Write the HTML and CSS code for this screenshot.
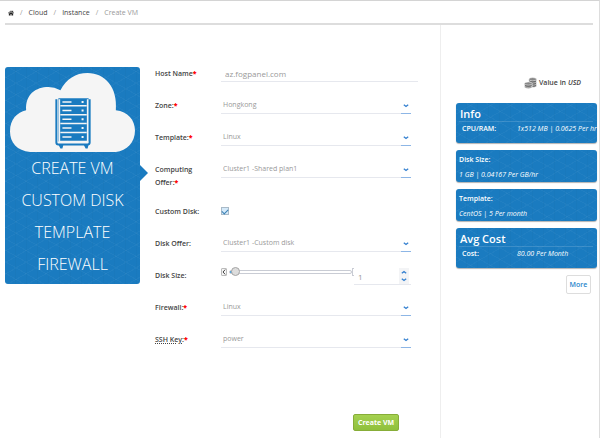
FILE: index.html
```html
<!DOCTYPE html>
<html lang="en">
<head>
<meta charset="utf-8">
<title>Create VM</title>
<link rel="stylesheet" href="styles.css">
</head>
<body>
<svg width="0" height="0" class="defs" aria-hidden="true">
  <symbol id="down" viewBox="0 0 6 4"><path d="M.8 .8 3 2.5 5.2 .8" fill="none" stroke="currentColor" stroke-width="1.3"/></symbol>
  <symbol id="up" viewBox="0 0 6 4"><path d="M.8 3.2 3 1.5 5.2 3.2" fill="none" stroke="currentColor" stroke-width="1.3"/></symbol>
</svg>
<nav class="crumbs" aria-label="Breadcrumb">
  <a href="#" aria-label="Home"><svg class="home" viewBox="0 0 14 12"><path d="M7 0 0 6l1 1 6-5 6 5 1-1-2-2V1h-2v1.500zM2 7.500V12h4V8.500h2V12h4V7.500L7 3.400z"/></svg></a>
  <span class="sep">/</span><a href="#">Cloud</a>
  <span class="sep">/</span><a href="#">Instance</a>
  <span class="sep">/</span><span class="current">Create VM</span>
</nav>
<main class="layout">
  <aside class="steps tile">
    <svg class="cloud" viewBox="0 0 124 79" aria-hidden="true">
      <path fill="#f5f5f5" d="M20 78.500C7 77 0 69 0 58 0 46 7 39 16 37 15 21 26 14 38 14q6 0 12 3C56 6 65 0 77 0c17 0 30 14 28 37 12 1 19 10 19 20 0 12-8 20-19 21.500z"/>
      <g fill="#1a7bc0">
        <path d="M48 25h30v43H48z"/>
        <path d="M46 26v43q0 2 2 2h29q2 0 2-2V26" fill="none" stroke="#1a7bc0" stroke-width="2"/>
        <path d="M48 71h5l-1 4h-2zM73 71h5l-1 4h-2z"/>
      </g>
      <path d="M49 26v42h28V26M50 32.500h26M50 41.500h26M50 50h26M50 59h26" fill="none" stroke="#f5f5f5" stroke-width="1.500"/>
      <path d="M52 28.800h9M52 37.200h9M52 46h9M52 54.600h9M52 63.500h9" stroke="#f5f5f5" stroke-width="1.500"/>
      <path d="M71 28.800h2M71 37.200h2M71 46h2M71 54.600h2M71 63.500h2" stroke="#f5f5f5" stroke-width="2"/>
    </svg>
    <a class="active" href="#">CREATE VM</a>
    <a href="#">CUSTOM DISK</a>
    <a href="#">TEMPLATE</a>
    <a href="#">FIREWALL</a>
  </aside>
  <form class="form">
    <div class="row"><label for="host">Host Name<b>*</b></label><input class="text" id="host" type="text" value="az.fogpanel.com"></div>
    <div class="row"><label for="zone">Zone:<b>*</b></label><div class="pick"><select id="zone"><option>Hongkong</option></select><svg><use href="#down"/></svg></div></div>
    <div class="row"><label for="template">Template:<b>*</b></label><div class="pick"><select id="template"><option>Linux</option></select><svg><use href="#down"/></svg></div></div>
    <div class="row"><label for="offer">Computing Offer:<b>*</b></label><div class="pick"><select id="offer"><option>Cluster1 -Shared plan1</option></select><svg><use href="#down"/></svg></div></div>
    <div class="row"><label for="custom">Custom Disk:</label><input class="check" id="custom" type="checkbox" checked></div>
    <div class="row"><label for="disk">Disk Offer:</label><div class="pick"><select id="disk"><option>Cluster1 -Custom disk</option></select><svg><use href="#down"/></svg></div></div>
    <div class="row"><label for="size">Disk Size:</label>
      <div class="size">
        <button class="dec" type="button" aria-label="Decrease"><svg viewBox="0 0 4 6"><path d="M3.200 .6 1 3l2.200 2.400" fill="none" stroke="#444"/></svg></button>
        <input class="slider" id="size" type="range" min="0" max="100" value="1">
        <span class="end"></span>
        <div class="spin">
          <input type="text" value="1" aria-label="Disk size value">
          <div class="arrows"><button type="button" aria-label="Up"><svg><use href="#up"/></svg></button><button type="button" aria-label="Down"><svg><use href="#down"/></svg></button></div>
        </div>
      </div>
    </div>
    <div class="row"><label for="firewall">Firewall:<b>*</b></label><div class="pick"><select id="firewall"><option>Linux</option></select><svg><use href="#down"/></svg></div></div>
    <div class="row"><label for="key"><span class="dotted">SSH Key:</span><b>*</b></label><div class="pick"><select id="key"><option>power</option></select><svg><use href="#down"/></svg></div></div>
    <button class="submit" type="submit">Create VM</button>
  </form>
  <aside class="summary">
    <p class="currency">
      <svg class="coins" viewBox="0 0 24 22" aria-hidden="true">
        <g fill="#666" stroke="#fff"><path d="M9 4v12c0 4 14 4 14 0V4"/><ellipse cx="16" cy="4" rx="7" ry="3" fill="#888"/><path d="M9 8c0 4 14 4 14 0M9 12c0 4 14 4 14 0" fill="none"/>
        <path d="M1 12v6c0 4 14 4 14 0v-6"/><ellipse cx="8" cy="12" rx="7" ry="3" fill="#888"/><path d="M1 16c0 4 14 4 14 0" fill="none"/></g>
      </svg>
      <span>Value in <em>USD</em></span>
    </p>
    <section class="card tile"><h2>Info</h2><dl class="pair"><dt>CPU/RAM:</dt><dd>1x512 MB | 0.0625 Per hr</dd></dl></section>
    <section class="card tile"><dl class="stack"><dt>Disk Size:</dt><dd>1 GB | 0.04167 Per GB/hr</dd></dl></section>
    <section class="card tile"><dl class="stack"><dt>Template:</dt><dd>CentOS | 5 Per month</dd></dl></section>
    <section class="card tile"><h2>Avg Cost</h2><dl class="pair"><dt>Cost:</dt><dd>80.00 Per Month</dd></dl></section>
    <button class="more" type="button">More</button>
  </aside>
</main>
</body>
</html>
```
FILE: styles.css
```css
* { box-sizing: border-box; }

body {
  margin: 0;
  min-height: 100vh;
  display: flex;
  flex-direction: column;
  border-top: 1px solid #d4d4d4;
  border-right: 1px solid #ddd;
  background: #fff;
  color: #444;
  font: 7px/13px "Open Sans", "Noto Sans", sans-serif;
}

button, input, select { font: inherit; margin: 0; padding: 0; }
svg { display: block; }
a { color: inherit; text-decoration: none; }
.defs { position: absolute; }

.crumbs {
  display: flex;
  align-items: center;
  gap: 6px;
  margin: 0 6px 0 5px;
  padding: 5px 3px 4px;
  border-bottom: 2px solid #ddd;
}
.home { width: 6px; height: 6px; fill: #222; }
.sep, .current { color: #999; }

.layout {
  flex: 1;
  display: grid;
  grid-template-columns: 135px minmax(0, 1fr) 157px;
  padding: 0 1px 0 5px;
}

.tile {
  border-radius: 3px;
  background-color: #1a7bc0;
  background-image:
    repeating-linear-gradient(30deg, transparent 0 9px, rgba(255, 255, 255, .03) 9px 10px),
    repeating-linear-gradient(150deg, transparent 0 9px, rgba(255, 255, 255, .03) 9px 10px),
    repeating-linear-gradient(90deg, transparent 0 10px, rgba(0, 0, 0, .02) 10px 11px);
  color: #fff;
}

.steps {
  align-self: start;
  margin-top: 42px;
  padding: 6px 5px 4px;
  font-size: 16px;
  font-weight: 300;
  line-height: 32px;
  text-align: center;
}
.cloud { width: 100%; margin-bottom: -1px; }
.steps a { display: block; position: relative; }
.steps .active::after {
  content: "";
  position: absolute;
  top: 13px;
  right: -13px;
  border: 8px solid transparent;
  border-right: 0;
  border-left-color: #1a7bc0;
}

.form {
  display: flex;
  flex-direction: column;
  gap: 16px;
  padding: 41px 22px 7px 15px;
  border-right: 1px solid #eee;
}
.row {
  display: grid;
  grid-template-columns: 54px minmax(0, 1fr);
  column-gap: 12px;
  align-items: start;
  min-height: 16px;
}
.row label { padding-top: 1px; margin-bottom: -1px; font-weight: 600; }
.row b { color: #f00; }
.dotted { text-decoration: underline dotted 1px; }

.text, .pick select, .spin input {
  width: 100%;
  height: 16px;
  border: 0;
  border-bottom: 1px solid #e6e8ee;
  border-radius: 0;
  background: none;
  color: #999;
}
.text { padding-left: 4px; font-size: 8px; }
.pick { position: relative; margin-right: 7px; }
.pick select { display: block; appearance: none; padding: 0 12px 2px 2px; }
.pick::after {
  content: "";
  position: absolute;
  right: 0;
  bottom: 0;
  width: 10px;
  height: 1px;
  background: #8db6e6;
}
.pick svg, .arrows svg { width: 6px; height: 4px; color: #3480d0; }
.pick svg { position: absolute; right: 2px; top: 6px; pointer-events: none; }

.check {
  appearance: none;
  width: 8px;
  height: 8px;
  margin-top: 3px;
  border: 1px solid #a9bac8;
  background: #d5eafa;
}
.check:checked::before {
  content: "";
  display: block;
  width: 5px;
  height: 3px;
  margin-top: 1px;
  border: solid #3b82b5;
  border-width: 0 0 1px 1px;
  transform: rotate(-45deg);
}

.size { display: flex; align-items: flex-start; margin-right: 7px; height: 16px; }
.dec {
  width: 6px;
  height: 8px;
  border: 1px solid #bbb;
  border-radius: 1px;
  background: #f5f5f5;
}
.dec svg { width: 4px; height: 6px; }
.slider {
  appearance: none;
  flex: 1;
  min-width: 0;
  height: 8px;
  margin-left: 2px;
  background: none;
}
.slider::-webkit-slider-runnable-track {
  height: 4px;
  border: 1px solid #c9ccd4;
  border-radius: 2px;
  background: linear-gradient(90deg, #2e9be0 4px, #fff 4px);
}
.slider::-webkit-slider-thumb {
  appearance: none;
  width: 9px;
  height: 9px;
  margin-top: -4px;
  border: 1px solid #a5a5a5;
  border-radius: 50%;
  background: #ddd;
}
.end { width: 2px; height: 8px; border: 1px solid #c9ccd4; border-right: 0; }
.spin { display: flex; width: 57px; border-bottom: 1px solid #e6e8ee; }
.spin input { flex: 1; min-width: 0; border: 0; padding-left: 4px; font-size: 8px; }
.arrows { display: flex; flex-direction: column; width: 10px; margin-right: 2px; }
.arrows button {
  display: grid;
  place-items: center;
  height: 8px;
  border: 0;
  background: #f3f4f6;
}

.submit {
  align-self: flex-end;
  margin: auto 19px 0 0;
  width: 46px;
  height: 17px;
  border: 1px solid #87ad38;
  border-radius: 2px;
  background: linear-gradient(#a5d150, #8fc03c);
  color: #fff;
  font-weight: 700;
}

.summary {
  display: flex;
  flex-direction: column;
  gap: 7px;
  padding: 51px 1px 0 15px;
}
.currency {
  display: flex;
  align-items: center;
  justify-content: flex-end;
  gap: 2px;
  margin: 0 16px 7px 0;
  font-weight: 600;
}
.coins { width: 13px; height: 12px; }
.card { padding: 3px 0 5px 3px; box-shadow: 0 1px 1px rgba(0, 0, 0, .3); }
.card h2 {
  margin: 0 4px 0 0;
  padding-left: 1px;
  border-bottom: 1px solid rgba(255, 255, 255, .15);
  font-size: 11px;
  font-weight: 600;
  line-height: 15px;
}
.card dl, .card dd { margin: 0; }
.card dt { font-weight: 600; }
.card dd { font-style: italic; white-space: nowrap; }
.pair { display: grid; grid-template-columns: 55px 1fr; padding: 0 0 3px 3px; }
.card .pair { padding: 0 0 3px 3px; }
.card .stack { display: grid; gap: 2px; margin-bottom: -4px; }
.more {
  align-self: flex-end;
  width: 25px;
  height: 19px;
  margin-right: 6px;
  border: 1px solid #ddd;
  border-radius: 2px;
  background: #fff;
  color: #2a86cc;
  font-weight: 600;
}
```
